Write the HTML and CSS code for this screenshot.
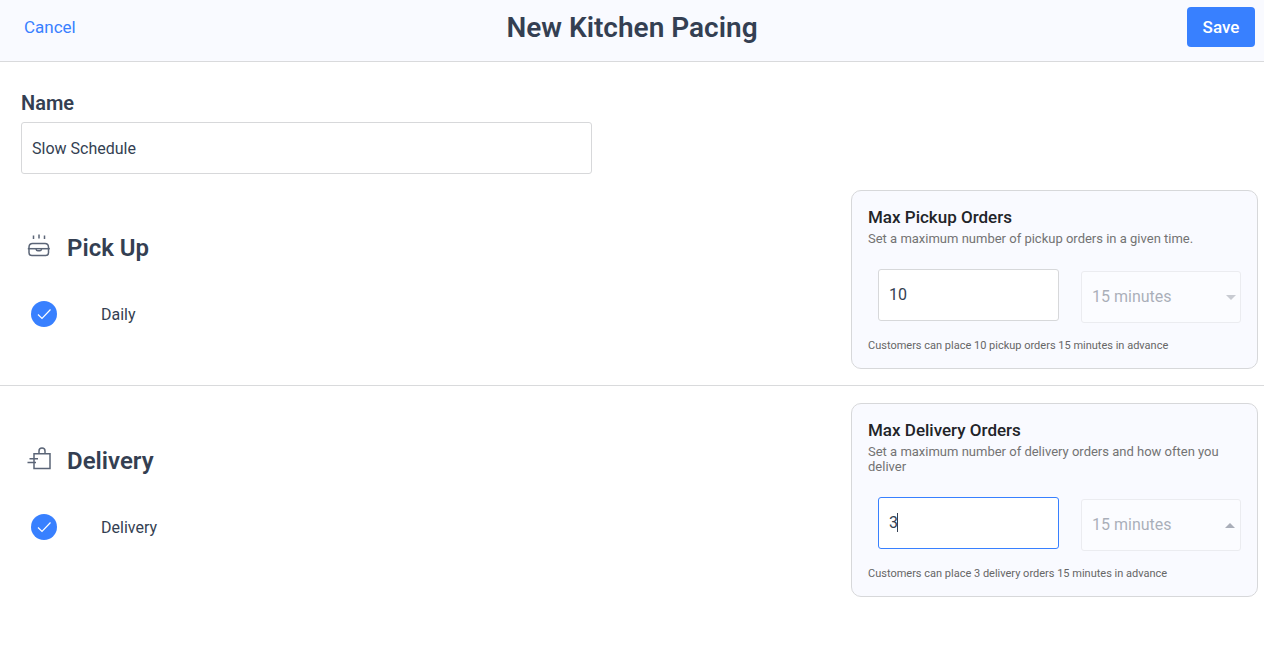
FILE: index.html
```html
<!DOCTYPE html>
<html lang="en">
<head>
    <meta charset="UTF-8">
    <meta name="viewport" content="width=device-width, initial-scale=1.0">
    <title>New Kitchen Pacing</title>
    <link rel="stylesheet" href="styles.css">
</head>
<body>

<form class="page" id="pacingForm">
    <header class="topbar">
        <a href="#" class="cancel">Cancel</a>
        <h1>New Kitchen Pacing</h1>
        <button type="submit" class="save">Save</button>
    </header>

    <div class="name-row">
        <div class="name-field">
            <label for="name">Name</label>
            <input type="text" class="field" id="name" value="Slow Schedule">
        </div>
    </div>

    <section class="service">
        <div class="service-main">
            <div class="service-title">
                <svg class="icon" viewBox="0 0 24 24" aria-hidden="true">
                    <path class="steam" d="M6.5 1.5v3.500M12 .5v4M17.500 1.500v3.500"/>
                    <path d="M2 14.700v-1.700q.3-3.500 3.500-3.500h12.500q3.200 0 3.500 3.500v1.700"/>
                    <path d="M.8 14.700h22"/>
                    <path d="M2 14.700v4q0 2.800 2.800 2.800h13.900q2.800 0 2.800-2.800v-4"/>
                    <path d="M9 14.700q.2 2 1.800 2h2q1.600 0 1.800-2"/>
                </svg>
                <h2>Pick Up</h2>
            </div>
            <div class="option">
                <input type="checkbox" id="daily" checked>
                <label for="daily">Daily</label>
            </div>
        </div>

        <div class="card">
            <h3 id="pickupTitle">Max Pickup Orders</h3>
            <p class="description">Set a maximum number of pickup orders in a given time.</p>
            <div class="limits">
                <div class="amount">
                    <input type="text" class="field" id="pickupMax" inputmode="numeric" value="10" aria-labelledby="pickupTitle">
                </div>
                <select class="field" aria-label="Pickup interval" disabled>
                    <option>15 minutes</option>
                </select>
            </div>
            <p class="summary">Customers can place 10 pickup orders 15 minutes in advance</p>
        </div>
    </section>

    <section class="service">
        <div class="service-main">
            <div class="service-title">
                <svg class="icon" viewBox="0 0 24 24" aria-hidden="true">
                    <path d="M7 6.800h16v14.700H7z"/>
                    <path d="M12 6.800V4q0-3 3-3t3 3v2.800"/>
                    <path d="M2.500 11.800h8.500M.5 15.500h8.500"/>
                </svg>
                <h2>Delivery</h2>
            </div>
            <div class="option">
                <input type="checkbox" id="delivery" checked>
                <label for="delivery">Delivery</label>
            </div>
        </div>

        <div class="card">
            <h3 id="deliveryTitle">Max Delivery Orders</h3>
            <p class="description">Set a maximum number of delivery orders and how often you deliver</p>
            <div class="limits">
                <div class="amount">
                    <input type="text" class="field" id="deliveryMax" inputmode="numeric" value="3" aria-labelledby="deliveryTitle">
                    <span class="cursor"></span>
                </div>
                <select class="field open" aria-label="Delivery interval" disabled>
                    <option>15 minutes</option>
                </select>
            </div>
            <p class="summary">Customers can place 3 delivery orders 15 minutes in advance</p>
        </div>
    </section>
</form>

<script>
    // Start with the cursor after the delivery limit
    const deliveryMax = document.getElementById("deliveryMax");
    deliveryMax.focus();
    deliveryMax.setSelectionRange(deliveryMax.value.length, deliveryMax.value.length);

    // The drawn cursor only fits the starting value
    deliveryMax.addEventListener("input", function() {
        document.querySelector(".cursor").hidden = true;
    });

    document.getElementById("pacingForm").addEventListener("submit", function(e) {
        e.preventDefault();
    });
</script>

</body>
</html>
```
FILE: styles.css
```css
* {
    box-sizing: border-box;
}
body {
    margin: 0;
    background-color: #fff;
    color: #343f52;
    font-family: Roboto, "Liberation Sans", sans-serif;
    font-size: 16px;
}
h1, h2, h3, p {
    margin: 0;
}
input, select, button {
    font: inherit;
    color: inherit;
}

/* top bar */
.topbar {
    display: grid;
    grid-template-columns: 1fr auto 1fr;
    align-items: center;
    padding: 7px 9px 14px;
    background-color: #f9faff;
    border-bottom: 1px solid #d9dadc;
}
.cancel {
    justify-self: start;
    padding-left: 15px;
    color: #3880ff;
    font-size: 17px;
    text-decoration: none;
}
h1 {
    font-size: 28px;
    font-weight: 600;
    line-height: 38px;
    padding-top: 2px;
}
.save {
    justify-self: end;
    width: 68px;
    height: 40px;
    padding: 0;
    background-color: #3880ff;
    color: #fff;
    font-size: 17px;
    font-weight: 500;
    border: none;
    border-radius: 4px;
    cursor: pointer;
}

/* form fields */
.field {
    height: 52px;
    padding: 0 10px;
    background-color: #fff;
    border: 1px solid #d7d8da;
    border-radius: 3px;
    outline: none;
}
.field:focus {
    border-color: #3880ff;
}
.name-row {
    display: grid;
    grid-template-columns: 1fr 1fr;
    column-gap: 80px;
    padding: 29px 21px 0;
}
.name-field {
    display: flex;
    flex-direction: column;
    gap: 7px;
}
.name-field label {
    font-size: 20px;
    font-weight: 600;
    line-height: 24px;
}

/* services */
.service {
    display: flex;
    justify-content: space-between;
    padding: 16px 6px 16px 27px;
}
.service + .service {
    padding-top: 17px;
    border-top: 1px solid #d9dadc;
}
.service-main {
    padding-top: 41px;
}
.service-title {
    display: flex;
    align-items: center;
    gap: 16px;
}
.icon {
    width: 24px;
    height: 24px;
    margin-bottom: 4px;
    fill: none;
    stroke: #5b6577;
    stroke-width: 1.5;
}
h2 {
    font-size: 24px;
    font-weight: 600;
    line-height: 34px;
}
.option {
    display: flex;
    align-items: center;
    gap: 44px;
    margin-top: 36px;
    padding-left: 4px;
}
.option input {
    appearance: none;
    width: 26px;
    height: 26px;
    margin: 0;
    border-radius: 50%;
    border: 1px solid #d7d8da;
}
.option input:checked {
    border: none;
    background: #3880ff url("data:image/svg+xml,%3Csvg xmlns='http://www.w3.org/2000/svg' viewBox='0 0 26 26'%3E%3Cpath d='M7 13.500l4 4 8.500-9' fill='none' stroke='white' stroke-width='1.2'/%3E%3C/svg%3E");
}

/* order limit cards */
.card {
    width: 407px;
    padding: 16px 16px 15px;
    background-color: #f9faff;
    border: 1px solid #d7d8da;
    border-radius: 10px;
}
h3 {
    color: #222428;
    font-size: 17px;
    font-weight: 500;
    line-height: 20px;
}
.description {
    margin-top: 4px;
    color: #737373;
    font-size: 13px;
    line-height: 15px;
}
.limits {
    display: flex;
    gap: 22px;
    padding: 23px 0 0 10px;
}
.limits .field {
    padding-bottom: 2px;
}
.amount {
    position: relative;
    flex: 1;
}
.amount input {
    display: block;
    width: 100%;
}
.cursor {
    position: absolute;
    top: 16px;
    left: 19px;
    width: 1px;
    height: 19px;
    background-color: #343f52;
    pointer-events: none;
}
.cursor[hidden],
.amount input:not(:focus) + .cursor {
    display: none;
}
.limits select {
    appearance: none;
    width: 160px;
    margin-top: 2px;
    opacity: .4;
    background: #fff url("data:image/svg+xml,%3Csvg xmlns='http://www.w3.org/2000/svg' viewBox='0 0 10 5'%3E%3Cpath d='M0 0h10L5 5z' fill='%23808690'/%3E%3C/svg%3E") no-repeat right 4px center / 10px 5px;
}
.limits select.open {
    background-position: right 5px center;
    background-image: url("data:image/svg+xml,%3Csvg xmlns='http://www.w3.org/2000/svg' viewBox='0 0 10 5'%3E%3Cpath d='M0 5h10L5 0z' fill='%23343f52'/%3E%3C/svg%3E");
}
.summary {
    margin-top: 16px;
    color: #666;
    font-size: 11px;
    line-height: 14px;
}
```
